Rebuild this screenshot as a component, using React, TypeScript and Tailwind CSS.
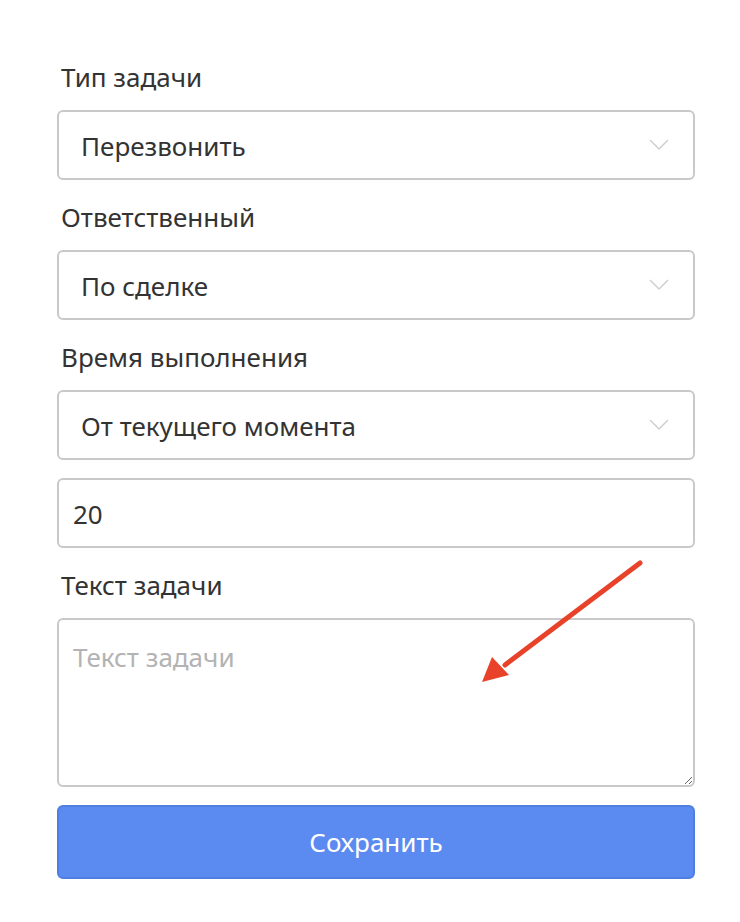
export default function App() {
  return (
    <div
      className="relative min-h-[922px] w-[740px] bg-white pt-[59px] pl-[57px] pr-[45px] text-[#333]"
      style={{ fontFamily: '"Noto Sans", "Open Sans", sans-serif' }}
    >
      <div className="flex flex-col">
        {/* TASK TYPE */}
        <label className="h-[36px] pl-[4px] text-[26px] leading-[36px]">Тип задачи</label>
        <div className="mt-[15px] flex h-[70px] items-center justify-between rounded-[6px] border-2 border-[#c9c9c9] pl-[22px] pr-[24px] text-[26px]">
          <span className="pt-[2px]">Перезвонить</span>
          <Chevron />
        </div>

        {/* RESPONSIBLE */}
        <label className="mt-[19px] h-[36px] pl-[4px] text-[26px] leading-[36px]">Ответственный</label>
        <div className="mt-[15px] flex h-[70px] items-center justify-between rounded-[6px] border-2 border-[#c9c9c9] pl-[22px] pr-[24px] text-[26px]">
          <span className="pt-[2px]">По сделке</span>
          <Chevron />
        </div>

        {/* TIME */}
        <label className="mt-[19px] h-[36px] pl-[4px] text-[26px] leading-[36px]">Время выполнения</label>
        <div className="mt-[15px] flex h-[70px] items-center justify-between rounded-[6px] border-2 border-[#c9c9c9] pl-[22px] pr-[24px] text-[26px]">
          <span className="pt-[2px]">От текущего момента</span>
          <Chevron />
        </div>

        <div className="mt-[18px] flex h-[70px] items-center rounded-[6px] border-2 border-[#c9c9c9] pl-[14px] pt-[2px] text-[26px]">
          20
        </div>

        {/* TEXT */}
        <label className="mt-[19px] h-[36px] pl-[4px] text-[26px] leading-[36px]">Текст задачи</label>
        <textarea
          placeholder="Текст задачи"
          className="mt-[15px] h-[169px] rounded-[6px] border-2 border-[#c9c9c9] px-[14px] pt-[20px] text-[26px] leading-[34px] outline-none placeholder:text-[#b3b3b3]"
        />

        <button className="mt-[18px] h-[74px] rounded-[6px] border-2 border-[#4f7ee0] bg-[#5b8af0] text-[26px] text-white">
          Сохранить
        </button>
      </div>

      {/* ARROW */}
      <svg className="absolute left-0 top-0" width="740" height="922" viewBox="0 0 740 922">
        <line x1="640" y1="563" x2="505" y2="665" stroke="#e8432a" strokeWidth="5" strokeLinecap="round" />
        <polygon points="482,682 492,657 509,675" fill="#e8432a" />
      </svg>
    </div>
  );
}

function Chevron() {
  return (
    <svg width="20" height="12" viewBox="0 0 20 12" fill="none" stroke="#cfcfcf" strokeWidth="1.5">
      <path d="M1 1l9 9 9-9" />
    </svg>
  );
}
